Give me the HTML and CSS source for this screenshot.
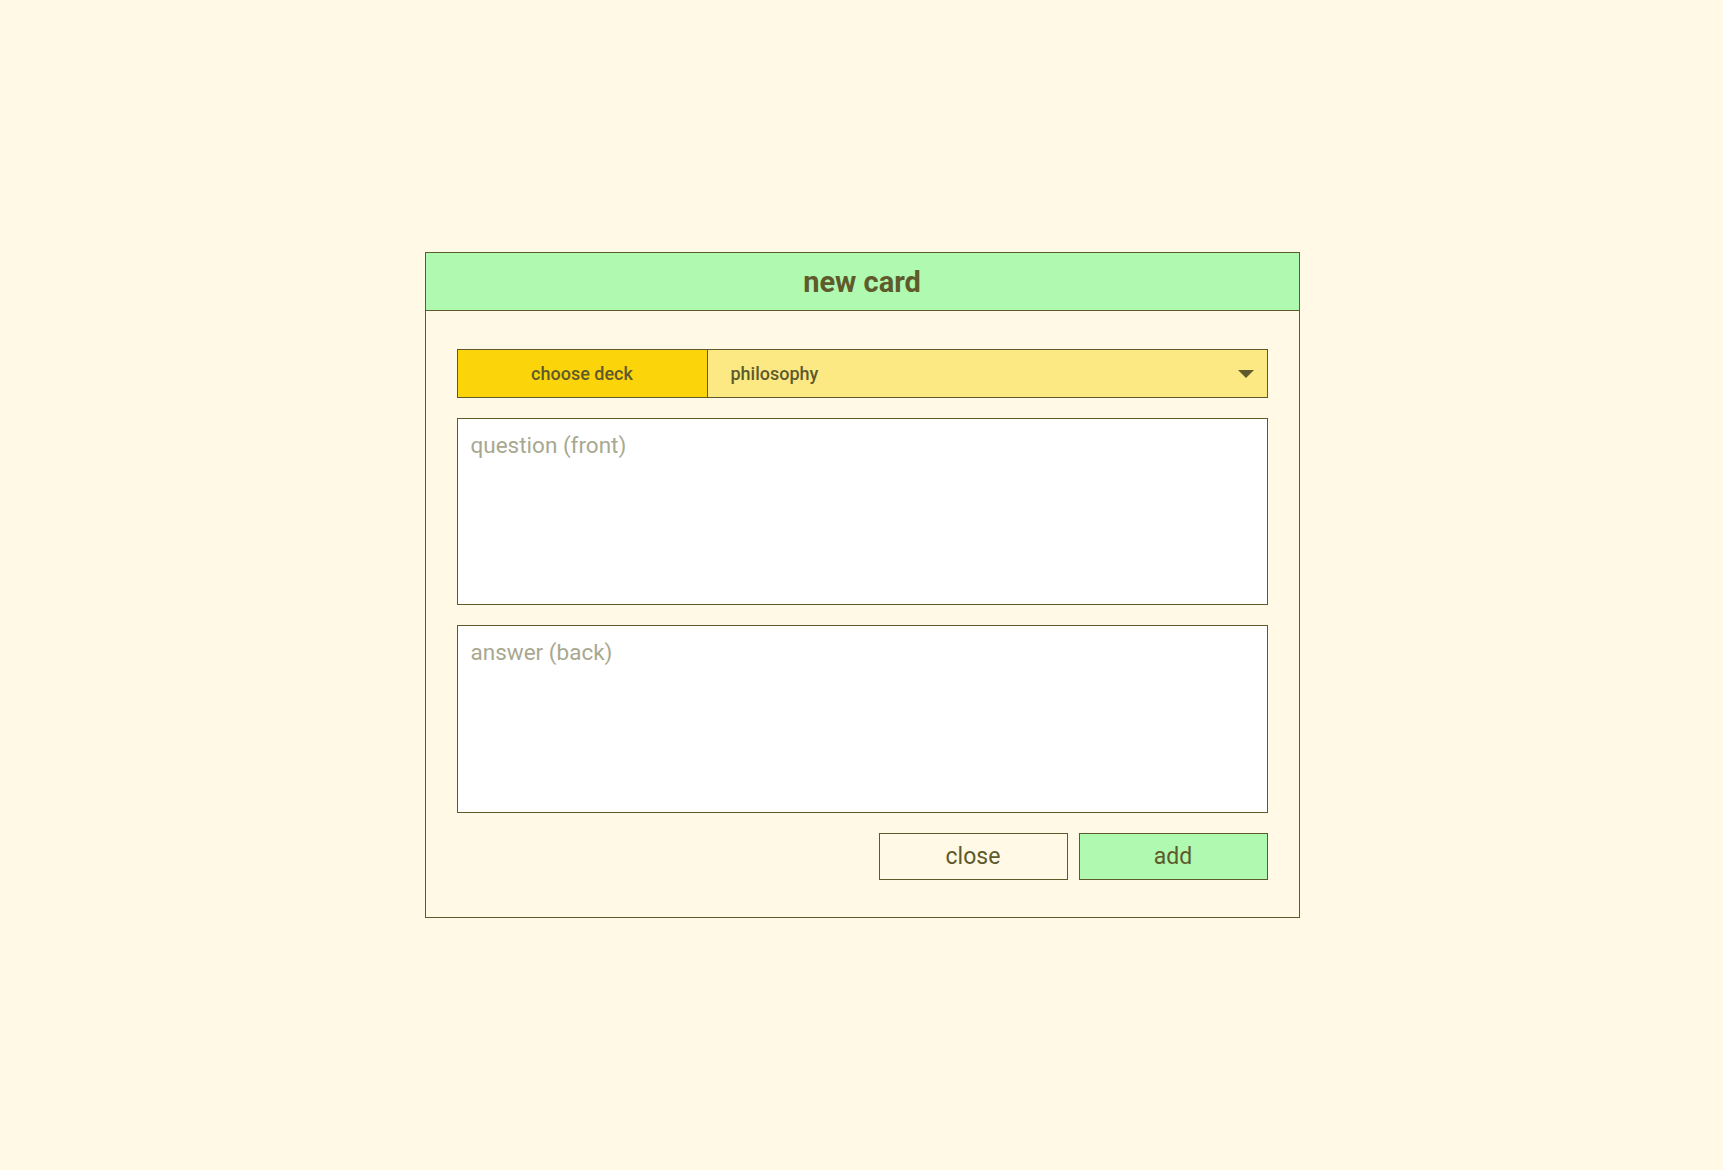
FILE: index.html
```html
<!DOCTYPE html>
<html>
<head>
<meta charset="utf-8">
<link rel="stylesheet" href="styles.css">
</head>
<body>
<div class="page">
  <div class="dialog">
    <div class="dialog-header">new card</div>
    <div class="dialog-body">
      <div class="deck-row">
        <div class="deck-label">choose deck</div>
        <div class="deck-select">
          <span class="deck-value">philosophy</span>
          <svg class="caret" width="16" height="8" viewBox="0 0 16 8"><path d="M0 0 H16 L8 8 Z" fill="#5e5a2c"/></svg>
        </div>
      </div>
      <div class="field field-front"><span class="placeholder">question (front)</span></div>
      <div class="field field-back"><span class="placeholder">answer (back)</span></div>
      <div class="actions">
        <button class="btn btn-close">close</button>
        <button class="btn btn-add">add</button>
      </div>
    </div>
  </div>
</div>
</body>
</html>
```

FILE: styles.css
```css
html, body {
  margin: 0;
  padding: 0;
  background: #fff9e6;
  font-family: Roboto, "Liberation Sans", sans-serif;
  color: #5e5a2c;
}
.page {
  height: 1170px;
  display: flex;
  justify-content: center;
  padding-top: 252px;
  box-sizing: border-box;
  padding-left: 1px;
}
.dialog {
  width: 875px;
  height: 666px;
  box-sizing: border-box;
  border: 1px solid #5e5a2c;
  background: #fff9e6;
  display: flex;
  flex-direction: column;
}
.dialog-header {
  height: 59px;
  box-sizing: border-box;
  background: #b0f9b0;
  border-bottom: 1px solid #5e5a2c;
  display: flex;
  align-items: center;
  justify-content: center;
  font-size: 29px;
  font-weight: 700;
}
.dialog-body {
  padding: 38px 31px 37px 31px;
  display: flex;
  flex-direction: column;
}
.deck-row {
  display: flex;
  height: 49px;
  box-sizing: border-box;
  border: 1px solid #5e5a2c;
  font-size: 18px;
  font-weight: 500;
}
.deck-label {
  width: 249px;
  background: #fcd40a;
  border-right: 1px solid #5e5a2c;
  display: flex;
  align-items: center;
  justify-content: center;
}
.deck-select {
  flex: 1;
  background: #fde984;
  display: flex;
  align-items: center;
  justify-content: space-between;
  padding: 0 13px 0 23px;
}
.caret { display: block; }
.field {
  margin-top: 20px;
  height: 187px;
  box-sizing: border-box;
  border: 1px solid #5e5a2c;
  background: #ffffff;
  padding: 13px 13px;
}
.field-back { height: 188px; }
.placeholder {
  font-size: 22.5px;
  color: #a8a890;
}
.actions {
  margin-top: 20px;
  display: flex;
  justify-content: flex-end;
  gap: 11px;
}
.btn {
  width: 189px;
  height: 47px;
  box-sizing: border-box;
  border: 1px solid #5e5a2c;
  font-family: Roboto, "Liberation Sans", sans-serif;
  font-size: 23px;
  color: #5e5a2c;
  padding: 0;
  margin: 0;
}
.btn-close { background: #fff9e6; }
.btn-add { background: #b0f9b0; }
```
